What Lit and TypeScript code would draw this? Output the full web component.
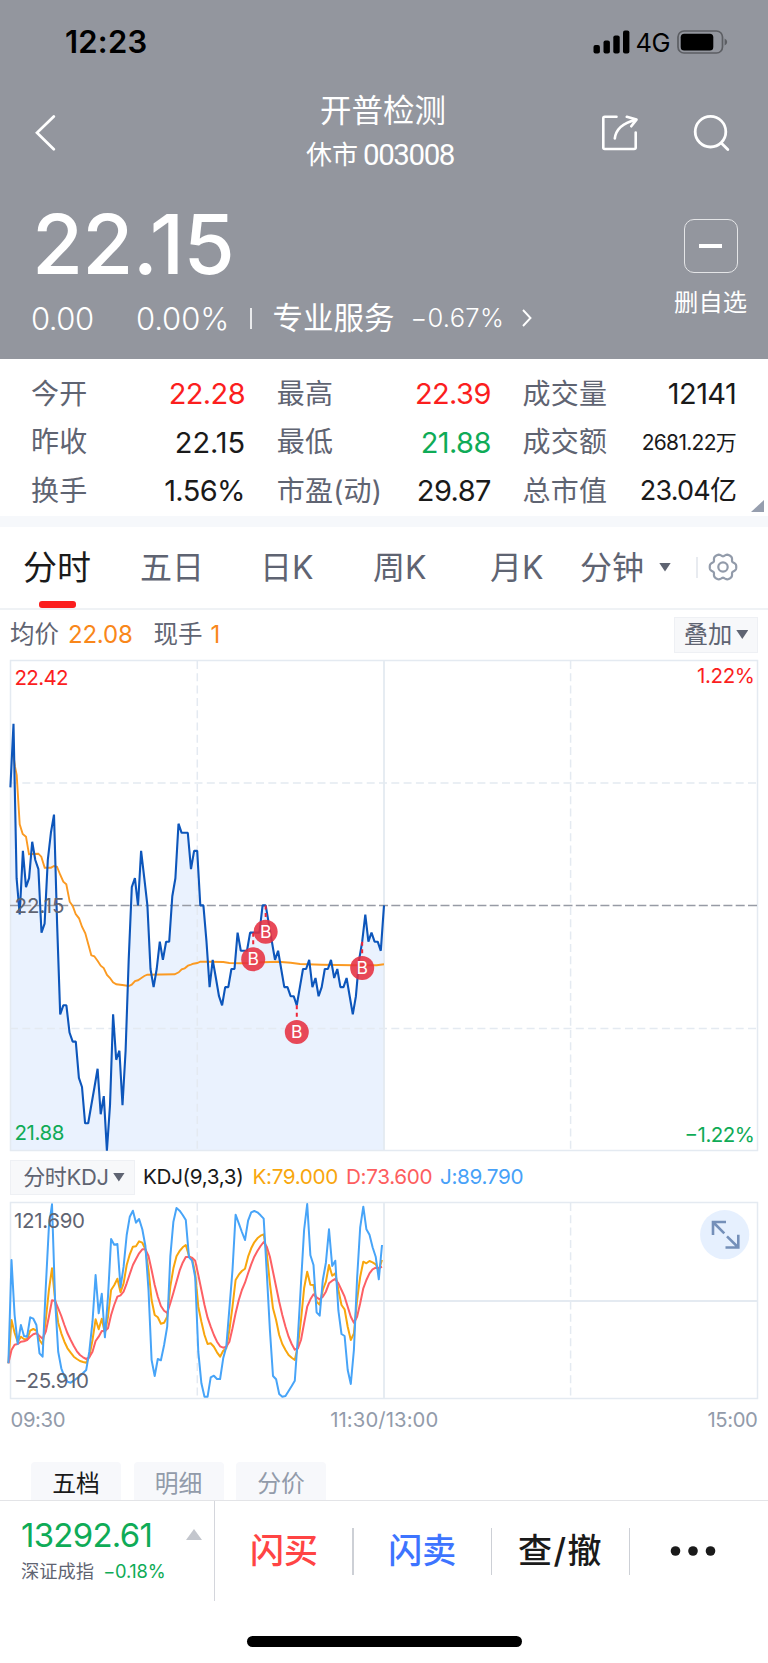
import { LitElement, html, svg, css } from "lit";
import { customElement } from "lit/decorators.js";

type Pt = [number, number];

/* Minute prices as offsets from the previous close, in 0.01 */
const PRICE = [
  13, 20, 3, -1, 6, 2, 3, 7, 5, 4, -3, -2, 5, 8, 10, -2, -12, -11, -11, -14, -15, -15, -19, -20, -24, -24, -22, -20,
  -18, -23, -21, -27, -22, -12, -17, -16, -22, -16, -6, 2, 3, 0, 6, 3, 0, -7, -9, -7, -4, -6, -4, -4, 1, 3, 9, 8, 8,
  8, 4, 6, 6, 0, 0, -4, -9, -6, -8, -10, -11, -9, -9, -7, -7, -3, -5, -5, -5, -3, -3, -3, -3, 0, 0, -2, -4, -6, -5,
  -7, -9, -9, -10, -10, -11, -9, -7, -7, -6, -9, -8, -10, -9, -7, -7, -6, -8, -7, -9, -9, -8, -10, -12, -10, -6, -4,
  -1, -4, -3, -4, -4, -5, 0,
];

/* Average price curve, in thirds of a pixel */
const AVERAGE: Pt[] = [
  [36, 290], [40, 282], [45, 320], [50, 345], [59, 493], [68, 522], [78, 530], [87, 583], [97, 582], [115, 581], [124, 590], [134, 623],
  [153, 623], [162, 618], [171, 620], [181, 645], [190, 665], [199, 673], [209, 725], [218, 738], [227, 762],
  [237, 775], [246, 800], [256, 820], [265, 853], [274, 886], [283, 889], [293, 903], [302, 917], [311, 924],
  [321, 945], [330, 954], [339, 967], [349, 973], [367, 975], [386, 978], [395, 974], [405, 963], [414, 961],
  [423, 955], [433, 948], [442, 944], [524, 943], [536, 937], [545, 928], [554, 925], [564, 917], [573, 914],
  [580, 911], [592, 909], [601, 905], [632, 905], [670, 906], [688, 909], [722, 910], [750, 909], [788, 907],
  [834, 905], [872, 908], [900, 912], [965, 914], [1058, 916], [1130, 916], [1152, 913],
];

/* KDJ curves, one height per minute, in thirds of a pixel */
const J = [
  670, 360, 525, 612, 555, 588, 590, 532, 536, 555, 640, 650, 440, 260, 193, 480, 635, 685, 710, 725, 728, 722, 715,
  708, 699, 690, 635, 545, 405, 520, 461, 592, 470, 297, 314, 312, 442, 380, 285, 230, 212, 248, 237, 268, 318, 450,
  660, 708, 657, 661, 615, 560, 350, 245, 204, 212, 225, 240, 352, 362, 412, 635, 730, 770, 770, 712, 707, 717, 717,
  655, 620, 505, 390, 224, 250, 276, 300, 242, 217, 213, 217, 226, 236, 400, 570, 708, 718, 762, 770, 768, 753, 738,
  722, 590, 430, 270, 192, 346, 375, 517, 527, 420, 368, 268, 378, 362, 512, 582, 588, 690, 732, 630, 415, 262, 200,
  268, 284, 322, 350, 418, 315,
];
const K = [
  670, 540, 578, 606, 590, 597, 598, 572, 567, 572, 600, 613, 540, 450, 385, 480, 548, 580, 605, 625, 638, 650, 657,
  663, 666, 668, 650, 600, 538, 568, 536, 580, 530, 450, 436, 416, 457, 430, 375, 343, 320, 319, 304, 308, 328, 390,
  480, 525, 532, 551, 548, 530, 440, 385, 349, 333, 322, 315, 348, 356, 400, 500, 545, 585, 612, 610, 620, 637, 650,
  632, 625, 570, 500, 420, 404, 393, 386, 350, 325, 307, 295, 287, 283, 340, 430, 505, 540, 585, 612, 630, 645, 653,
  660, 618, 540, 445, 395, 434, 435, 485, 494, 450, 425, 375, 407, 400, 450, 495, 508, 560, 600, 580, 480, 410, 365,
  370, 363, 367, 373, 390, 360,
];
const D = [
  670, 630, 614, 612, 605, 604, 600, 590, 583, 580, 588, 596, 575, 530, 481, 483, 505, 528, 555, 580, 600, 618, 634,
  645, 652, 657, 652, 635, 603, 590, 573, 573, 565, 525, 495, 470, 466, 455, 430, 402, 375, 357, 340, 328, 328, 348,
  390, 435, 470, 498, 512, 519, 490, 458, 425, 392, 368, 351, 351, 353, 362, 405, 450, 495, 533, 560, 585, 605, 619,
  623, 620, 605, 565, 520, 480, 450, 428, 400, 373, 350, 333, 318, 306, 320, 350, 395, 440, 485, 525, 560, 590, 612,
  629, 625, 600, 550, 500, 478, 463, 472, 478, 470, 455, 430, 422, 417, 430, 450, 470, 500, 530, 548, 530, 490, 445,
  420, 400, 388, 383, 384, 380,
];

/* Buy markers: minute index, price offset, circle centre height */
const BUYS: [number, number, number][] = [
  [78, -3, 959.3],
  [82, 0, 931.7],
  [92, -11, 1032],
  [113, -4, 968],
];

const TOP = 656;
const px = (i: number) => 10.4 + i * 3.113;
const py = (v: number) => 905.4 - TOP - v * 9.08;
const pricePath = PRICE.map((v, i) => `${px(i).toFixed(1)},${py(v).toFixed(1)}`).join(" ");
const avgPath = AVERAGE.map(([x, y]) => `${(x / 3).toFixed(1)},${(y / 3 + 4).toFixed(1)}`).join(" ");
const kdj = (a: number[]) => a.map((y, i) => `${(8.4 + i * 3.113).toFixed(1)},${(y / 3 - 60).toFixed(1)}`).join(" ");

const STATS = [
  ["今开", "22.28", "red"], ["最高", "22.39", "red"], ["成交量", "12141", ""],
  ["昨收", "22.15", "wide"], ["最低", "21.88", "green"], ["成交额", "2681.22万", "small"],
  ["换手", "1.56%", ""], ["市盈(动)", "29.87", ""], ["总市值", "23.04亿", "mid"],
];

const gearPath = (() => {
  let d = "";
  for (let a = 0; a <= 360; a += 5) {
    const t = (a * Math.PI) / 180;
    const r = 12.3 + 1.3 * Math.cos(6 * t) - 0.35 * Math.cos(12 * t);
    d += `${a ? "L" : "M"}${(15 + r * Math.cos(t)).toFixed(2)} ${(15 + r * Math.sin(t)).toFixed(2)}`;
  }
  return d + "Z";
})();

@customElement("app-root")
export class AppRoot extends LitElement {
  static styles = css`
    :host {
      display: flex; flex-direction: column; width: 768px; height: 1663px; overflow: hidden;
      background: #fff; color: #1a1a1a;
      font-family: Inter, "Noto Sans CJK SC", sans-serif; white-space: nowrap; line-height: 1; font-weight: 400;
    }
    * { box-sizing: border-box; }
    svg { display: block; flex: none; }
    .row { display: flex; align-items: center; }
    .head { height: 358.5px; flex: none; background: #93969e; color: #fff; display: flex; flex-direction: column; }
    .status { height: 83px; padding: 0 40px 0 65px; color: #000; }
    .clock { font-size: 31px; font-weight: 600; flex: 1; letter-spacing: .2px; }
    .net { font-size: 25.5px; font-weight: 400; margin: 3px 7px 0 5px; letter-spacing: -0.5px; }
    .nav { height: 100px; padding: 0 38px 0 35px; }
    .titles { flex: 1; display: flex; flex-direction: column; align-items: center; padding-left: 107px; }
    .name { font-size: 31.5px; line-height: 42px; margin-top: -4px; }
    .code { font-size: 26px; line-height: 34px; display: flex; gap: 5px; margin-top: 6px; padding-right: 6px; }
    .code b { font: 400 29.5px/34px Roboto, sans-serif; letter-spacing: -1.4px; }
    .share { margin-right: 54px; }
    .quote { flex: 1; padding: 0 21px 0 31px; display: flex; justify-content: space-between; }
    .price { font-size: 83px; font-weight: 500; height: 63px; line-height: 63px; margin-top: 30px; padding-left: 1px; letter-spacing: -.8px; }
    .change { margin-top: 23px; height: 38px; font-size: 31px; font-weight: 300; }
    .chg { width: 105px; letter-spacing: -.5px; }
    .pct { width: 114px; letter-spacing: -.1px; }
    .bar { width: 1.5px; height: 21px; background: #fff; opacity: .8; margin-right: 21px; }
    .sector { font-size: 30.5px; font-weight: 400; margin-right: 16px; }
    .spct { font-size: 25.5px; margin-right: 17px; letter-spacing: .3px; }
    .fav { display: flex; flex-direction: column; align-items: center; padding-top: 36px; gap: 17px; font-size: 24.3px; }
    .minus { width: 54px; height: 54px; border: 1.6px solid #e4e5e7; border-radius: 10px; display: grid; place-items: center; }
    .minus i { width: 23px; height: 4.5px; background: #fff; }
    .stats {
      height: 157.5px; flex: none; padding: 11px 31px 0; display: grid; position: relative;
      grid-template-columns: 214px 214px 213.5px; column-gap: 31.8px; grid-auto-rows: 48.5px;
    }
    .stat { display: flex; justify-content: space-between; align-items: center; font-size: 29px; letter-spacing: -.6px; }
    .stat span { font-size: 28px; color: #5f6472; letter-spacing: .2px; }
    .red { color: #fb1e1e; } .green { color: #0fab57; }
    .stat .wide { letter-spacing: -.1px; }
    .stat .small { font-size: 21px; letter-spacing: -.7px; }
    .stat .mid { font-size: 27px; letter-spacing: -.8px; }
    .corner { position: absolute; right: 4px; bottom: 4px; width: 13px; height: 12px; background: #969eae; clip-path: polygon(100% 0, 100% 100%, 0 100%); }
    .band { height: 10.5px; flex: none; background: #f6f8fb; }
    .tabs { height: 83px; flex: none; border-bottom: 2px solid #eff2f5; padding-left: 23px; color: #5f6472; font-size: 32px; }
    .tabs div { padding-top: 2px; }
    .tabs .on { font-size: 34px; color: #1a1a1a; width: 117px; height: 100%; display: flex; align-items: center; position: relative; }
    .on::after { content: ""; position: absolute; left: 16px; bottom: 0; width: 37px; height: 6.5px; border-radius: 3px; background: #fb1e1e; }
    .caret { width: 12px; height: 9px; background: #5f6472; clip-path: polygon(0 0, 100% 0, 50% 100%); }
    .tsep { width: 1.5px; height: 21px; background: #e8ebf0; margin: 0 10.5px 0 25px; }
    .t1 { width: 120px; } .t2 { width: 113px; } .t3 { width: 117px; } .t4 { width: 90px; } .t5 { width: 79px; }
    .info { height: 46px; flex: none; padding: 4px 10px 0 10px; font-size: 24.5px; color: #5f6472; }
    .info em, .info b { font-style: normal; font-weight: 400; color: #f9871a; }
    .info em { margin: 0 21px 0 9px; font-size: 24px; letter-spacing: -.2px; } .info b { margin-left: 8px; flex: 1; font-size: 24px; }
    .btn { display: flex; align-items: center; justify-content: center; gap: 4px; background: #f7f8fa; border: 1.5px solid #eef0f4; height: 36px; width: 84px; color: #5f6472; font-size: 24.3px; }
    .kbar { height: 44px; flex: none; padding: 1px 10px 0; font-size: 20.7px; letter-spacing: -.35px; }
    .kbar .btn { width: 125px; height: 35px; font-size: 22px; margin-right: 8px; gap: 4px; letter-spacing: -.3px; padding-left: 3px; }
    .k { color: #f8a60d; width: 93.5px; } .d { color: #fd5e5e; width: 94px; } .j { color: #47a1f8; } .kd { width: 109.5px; }
    .chart { font-size: 20.5px; flex: none; }
    .times { height: 40px; flex: none; padding: 2px 10.5px 0; justify-content: space-between; font-size: 20.3px; letter-spacing: -.4px; color: #929baa; }
    .times .noon { letter-spacing: .1px; margin-right: 4px; }
    .depth { height: 60px; flex: none; padding: 0 31px; gap: 12.5px; align-items: flex-end; }
    .depth div { width: 90px; height: 38px; background: #f7f8fb; border-radius: 4px 4px 0 0; display: grid; place-items: center; font-size: 23.8px; color: #929baa; padding-top: 7px; }
    .depth .sel { color: #1a1a1a; }
    .foot { height: 101px; flex: none; border-top: 1.5px solid #e3e4e7; align-items: stretch; }
    .index { width: 215px; border-right: 1.5px solid #d4d6dc; padding: 17px 0 0 21px; }
    .idx { font-size: 33px; color: #0fab57; line-height: 34px; letter-spacing: -.75px; justify-content: space-between; padding-right: 12px; }
    .idx i { width: 16px; height: 11px; background: #c3c6cd; clip-path: polygon(50% 0, 100% 100%, 0 100%); }
    .sub { font-size: 18.3px; color: #5f6472; gap: 9px; margin-top: 10px; }
    .sub b { font-weight: 400; color: #0fab57; letter-spacing: -.2px; }
    .act { width: 138.2px; height: 101px; display: grid; place-items: center; font-size: 34px; font-weight: 500; position: relative; }
    .act + .act::before { content: ""; position: absolute; left: -.8px; top: 27px; width: 1.5px; height: 47px; background: #cdd0d6; }
    .trade { letter-spacing: 1.5px; }
    .more { padding-right: 11px; }
    .buy { color: #ff4444; } .sell { color: #3d74ff; }
    .home { width: 275px; height: 11px; flex: none; border-radius: 6px; background: #000; margin: 35px auto 0; }
  `;

  render() {
    const grid = "#e4eaf1";
    return html`
      <div class="head">
        <div class="row status">
          <div class="clock">12:23</div>
          <svg width="38" height="24" viewBox="0 0 38 24"><rect x="0.5" y="15" width="6.4" height="8.6" rx="2"/><rect x="10.5" y="10.5" width="6.4" height="13.1" rx="2"/><rect x="20.3" y="5.5" width="6.4" height="18.1" rx="2"/><rect x="30" y="0.5" width="6.4" height="23.1" rx="2"/></svg>
          <span class="net">4G</span>
          <svg width="51" height="24" viewBox="0 0 51 24"><rect x="1" y="1" width="44.5" height="22" rx="6" fill="none" stroke="#5c5e63" stroke-width="1.7"/><rect x="3.7" y="3.8" width="32.6" height="16.6" rx="3.5"/><path d="M47.6 8.5q2.6 1 2.6 3.5t-2.6 3.5z" fill="#5c5e63"/></svg>
        </div>
        <div class="row nav">
          <svg width="22" height="36" viewBox="0 0 22 36" fill="none" stroke="#fff" stroke-width="2.7" stroke-linecap="round"><path d="M18.8 1.5 2 17.7l16.8 16.5"/></svg>
          <div class="titles"><div class="name">开普检测</div><div class="code">休市<b>003008</b></div></div>
          <svg class="share" width="36" height="36" viewBox="0 0 36 36" fill="none" stroke="#fff" stroke-width="2.6" stroke-linecap="round" stroke-linejoin="round"><path d="M14.5 1.8H2.8Q1.3 1.8 1.3 3.3V32.5Q1.3 34 2.8 34H32Q33.7 34 33.7 32.5V17.5M12.8 23.5Q14.5 9.5 33.5 5M24.8 1.8 34.5 4.6 29.3 11.3"/></svg>
          <svg width="38" height="38" viewBox="0 0 38 38" fill="none" stroke="#fff" stroke-width="2.8" stroke-linecap="round"><circle cx="18.5" cy="17.7" r="15.3"/><path d="M29.5 29.3l6.3 6.2"/></svg>
        </div>
        <div class="quote">
          <div>
            <div class="price">22.15</div>
            <div class="row change">
              <span class="chg">0.00</span><span class="pct">0.00%</span><i class="bar"></i>
              <span class="sector">专业服务</span><span class="spct">−0.67%</span>
              <svg width="12" height="18" viewBox="0 0 12 18" fill="none" stroke="#fff" stroke-width="1.9"><path d="M2 1l7.5 8L2 17"/></svg>
            </div>
          </div>
          <div class="fav"><div class="minus"><i></i></div>删自选</div>
        </div>
      </div>
      <div class="stats">
        ${STATS.map(([l, v, c]) => html`<div class="stat"><span>${l}</span><div class=${c}>${v}</div></div>`)}
        <i class="corner"></i>
      </div>
      <div class="band"></div>
      <div class="row tabs">
        <div class="on">分时</div><div class="t1">五日</div><div class="t2">日K</div><div class="t3">周K</div><div class="t4">月K</div><div class="t5">分钟</div>
        <i class="caret"></i><i class="tsep"></i>
        <svg width="30" height="30" viewBox="0 0 30 30" fill="none" stroke="#929baa" stroke-width="2.2"><path d=${gearPath}/><circle cx="15" cy="15" r="4.7"/></svg>
      </div>
      <div class="row info">均价<em>22.08</em>现手<b>1</b><div class="btn">叠加<i class="caret"></i></div></div>
      <svg class="chart" width="768" height="499" viewBox="0 0 768 499">
        <polygon points="10.4,494 ${pricePath} 384,494" fill="#eaf2fe"/>
        <g fill="none" stroke=${grid} stroke-width="1.5">
          <rect x="10.5" y="4.5" width="747" height="490"/>
          <path d="M384 4.5V494.5" stroke-width="1.8"/>
          <path d="M10 127H757M10 372.5H757M197.3 5V494M570.6 5V494" stroke-dasharray="8 4.3"/>
        </g>
        <path d="M10 249.5H757" stroke="#979ba5" stroke-width="1.4" stroke-dasharray="9 3.3"/>
        <polyline points=${avgPath} fill="none" stroke="#fb9a22" stroke-width="1.9"/>
        <polyline points=${pricePath} fill="none" stroke="#0d56bb" stroke-width="2.1" stroke-linejoin="bevel"/>
        ${BUYS.map(([i, v, y]) => svg`
          <path d="M${px(i)} ${py(v)}V${y - TOP - 12}" stroke="#ef2638" stroke-width="2" stroke-dasharray="4 3.5"/>
          <circle cx=${px(i)} cy=${y - TOP} r="12" fill="#e62e3f" fill-opacity=".87"/>
          <text x=${px(i)} y=${y - TOP + 6} fill="#fff" font-size="17.5" text-anchor="middle">B</text>`)}
        <g fill="#5f6472">
          <text x="14.5" y="29.3" fill="#fb1e1e" textLength="54">22.42</text>
          <text x="14.5" y="257" textLength="50">22.15</text>
          <text x="14.5" y="484" fill="#0fab57" textLength="50">21.88</text>
          <text x="697" y="27" fill="#fb1e1e" textLength="58">1.22%</text>
          <text x="684.5" y="486" fill="#0fab57" textLength="70.5">−1.22%</text>
        </g>
      </svg>
      <div class="row kbar">
        <div class="btn">分时KDJ<i class="caret"></i></div>
        <span class="kd">KDJ(9,3,3)</span><span class="k">K:79.000</span><span class="d">D:73.600</span><span class="j">J:89.790</span>
      </div>
      <svg class="chart" width="768" height="201" viewBox="0 0 768 201">
        <g transform="translate(0 1)">
          <g fill="none" stroke=${grid} stroke-width="1.5">
            <rect x="10.5" y="2.5" width="747" height="196"/>
            <path d="M384 2.5V198.5M10.5 101H757" stroke-width="1.8"/>
            <path d="M197.3 3V198M570.6 3V198" stroke-dasharray="8 4.3"/>
          </g>
          <g fill="none" stroke-width="2" stroke-linejoin="round">
            <polyline points=${kdj(K)} stroke="#f8a60d"/>
            <polyline points=${kdj(D)} stroke="#fd6065"/>
            <polyline points=${kdj(J)} stroke="#47a4f8"/>
          </g>
          <text x="14" y="28" fill="#5f6472" textLength="71">121.690</text>
          <text x="14" y="187.7" fill="#5f6472" textLength="75">−25.910</text>
          <circle cx="724.7" cy="34.7" r="24.6" fill="#e6f0fe"/>
          <path d="M713 35V22H726M713 22 724.3 33.4M738.3 34.7V47.5H725.5M738.3 47.5 727 36.3" fill="none" stroke="#7590b9" stroke-width="2.6"/>
        </g>
      </svg>
      <div class="row times"><span>09:30</span><span class="noon">11:30/13:00</span><span>15:00</span></div>
      <div class="row depth"><div class="sel">五档</div><div>明细</div><div>分价</div></div>
      <div class="row foot">
        <div class="index">
          <div class="row idx">13292.61<i></i></div>
          <div class="row sub">深证成指<b>−0.18%</b></div>
        </div>
        <div class="act buy">闪买</div><div class="act sell">闪卖</div><div class="act trade">查/撤</div>
        <div class="act more"><svg width="46" height="12" viewBox="0 0 46 12" fill="#1a1a1a"><circle cx="5.5" cy="6" r="4.8"/><circle cx="23" cy="6" r="4.8"/><circle cx="40.5" cy="6" r="4.8"/></svg></div>
      </div>
      <div class="home"></div>
    `;
  }
}
